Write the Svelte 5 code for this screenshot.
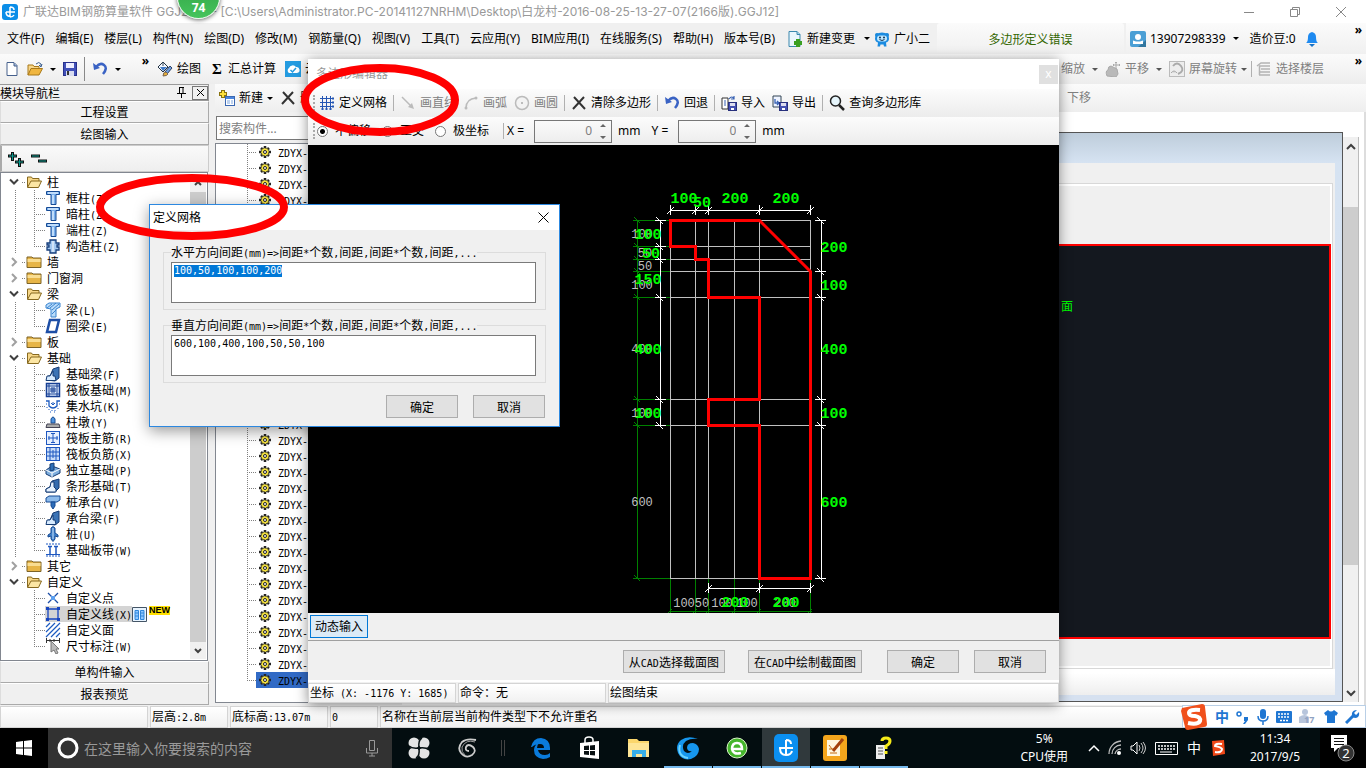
<script lang="ts">
  import { onMount } from "svelte";

  const icons: Record<string, string> = {
    app: '<rect width="16" height="16" rx="3" fill="#0b8ee8"/><path d="M8 3v10M4 8h9M8 3Q12 3 12 6M4 8q0 4 4 4.500M8 13q3 0 4-2" fill="none" stroke="#fff" stroke-width="1.500"/>',
    doc: '<path d="M3 1.500h7l3 3v10H3z" fill="#fff" stroke="#46608c"/><path d="M10 2v3h3" fill="#9db8dc" stroke="#46608c"/>',
    open: '<path d="M1 14V4h5l1 1.500h5V8" fill="#f8d78a" stroke="#a87818"/><path d="M1 14l3-6.500h11.500L12 14z" fill="#f0b640" stroke="#a87818"/><path d="M9 3q3-3 5 0v2m-2-1 2 2 1-3" fill="none" stroke="#3b5f8f"/>',
    save: '<rect x="1.500" y="1.500" width="13" height="13" fill="#4050b8" stroke="#28308c"/><rect x="4" y="2" width="8" height="5" fill="#eef"/><rect x="4" y="10" width="8" height="5" fill="#d8dcf0"/><path d="M6 10v4" stroke="#333" stroke-width="2"/>',
    undo: '<path d="M4 6q4-5 8-2t-1 9" fill="none" stroke="#3a63c4" stroke-width="2.500"/><path d="M1 2l1 7 6-2z" fill="#3a63c4"/>',
    paint: '<path d="M1 6l5-5 5 5-5 5z" fill="#f4f8ff" stroke="#234"/><path d="M3 6h7l-4 4z" fill="#3f79c6"/><path d="M6 5V1M11 6q2 1 1 4" stroke="#345" fill="none"/><path d="M8 11l5-6 2 2-5 6z" fill="#6f9fe0" stroke="#346"/><path d="M6 15q0-4 3-4l2 2q-1 2-5 2z" fill="#e8b03a" stroke="#765"/>',
    cloud: '<rect width="16" height="16" fill="#249be0"/><path d="M4 12a3 3 0 0 1 0-5 4 4 0 0 1 7-1 3 3 0 0 1 1 6z" fill="#fff"/><path d="M5.500 9l2 2L11 7" fill="none" stroke="#249be0" stroke-width="1.500"/>',
    change: '<path d="M2 .5h8l3 3v12H2z" fill="#eaf6fd" stroke="#3c88ae"/><path d="M10 .5v3h3" fill="#a8d4ea" stroke="#3c88ae"/><path d="M11 8v8M7 12h8" stroke="#3ba022" stroke-width="4"/>',
    robot: '<circle cx="3" cy="4" r="2" fill="#1484d6"/><circle cx="13" cy="4" r="2" fill="#1484d6"/><path d="M8 1.500q7 0 7 6 0 3-3 4l.5 4H10l-.5-2h-3l-.5 2H3.500l.5-4q-3-1-3-4 0-6 7-6z" fill="#1b8be0"/><rect x="3" y="4.500" width="10" height="6" rx="3" fill="#bfe8ff"/><circle cx="6" cy="6.500" r="1" fill="#135"/><circle cx="10" cy="6.500" r="1" fill="#135"/><path d="M5.500 8.500q2.500 2 5 0" fill="none" stroke="#135"/>',
    user: '<rect width="16" height="16" rx="2" fill="#4b9fd5"/><path d="M8 16L16 9v7z" fill="#32779f"/><circle cx="8" cy="6" r="3" fill="#fff"/><path d="M3 13V9.500l3 1h4l3-1V13z" fill="#fff"/>',
    bell: '<path d="M2 12q2-1 2-6 0-4 4-5 4 1 4 5 0 5 2 6z" fill="#1e8af0"/><path d="M5 13h6l-3 3z" fill="#1673c8"/>',
    hand: '<path d="M2 15q-2-5 1-6 0-4 3-4l6 3 1 5-2 3z" fill="#b9b9b9" stroke="#aaa"/><path d="M11 1v7M8 4h7M10 2l1-1 1 1M9 3L8 4l1 1M14 3l1 1-1 1" fill="none" stroke="#aaa"/>',
    rotate: '<rect x=".5" y=".5" width="15" height="15" fill="#ededed" stroke="#bbb"/><path d="M4 5q4-5 8 0t-3 8" fill="none" stroke="#aaa" stroke-width="2"/><path d="M2 12q3-4 6 0" stroke="#aaa" fill="#ddd"/>',
    floors: '<path d="M1 5l4-3h9M3 5h11M5 8h9M4 11h10M3 14h11M3.500 5v9" stroke="#b4b4b4" stroke-width="1.500" fill="none"/>',
    create: '<path d="M4 0v8M0 4h8" stroke="#8a7410" stroke-width="4"/><path d="M4 1v6M1 4h6" stroke="#ffe03a" stroke-width="2"/><rect x="6.500" y="6.500" width="9" height="9" fill="#fff" stroke="#3b68b2"/><path d="M7 8h8" stroke="#4c86dd" stroke-width="2"/><path d="M8 11h3M8 13h3M12 11h2M12 13h2" stroke="#7aa5e0"/>',
    cross: '<path d="M3 2l11 12M13 2L2 14" stroke="#333" stroke-width="2"/>',
    grid: '<path d="M3.500 1v14M7.500 1v14M11.500 1v14M1 3.500h14M1 7.500h14M1 11.500h14" stroke="#2456b4"/><path d="M14 2v3M14 6v3M14 10v3M2 14h3M6 14h3M10 14h3" stroke="#2456b4"/>',
    line: '<path d="M2 2l9 9" stroke="#bbb" stroke-width="1.500"/><path d="M14 14l-6-2 4-4z" fill="#bbb"/>',
    arc: '<path d="M3 13Q3 4 13 3" fill="none" stroke="#bbb" stroke-width="1.500"/><circle cx="3" cy="13" r="1.500" fill="#bbb"/><circle cx="13" cy="3" r="1.500" fill="#bbb"/>',
    circle: '<circle cx="8" cy="8" r="6.500" fill="#f3f3f3" stroke="#bbb" stroke-width="1.500"/><circle cx="8" cy="8" r="1" fill="#aaa"/>',
    importing: '<path d="M1 3h6v11H1z" fill="#fff" stroke="#333"/><path d="M3 6h2M3 8h2M3 10h2M8 4q3-4 5 0m0-3v3h-3" stroke="#3a63b4" fill="none" stroke-width="1.200"/><rect x="7.500" y="7.500" width="8" height="8" fill="#4450b0" stroke="#28307c"/><rect x="9" y="8" width="5" height="3" fill="#dde"/><path d="M10 14h3" stroke="#fff" stroke-width="2"/>',
    exporting: '<path d="M1 1h8v11H1z" fill="#eef3ff" stroke="#345"/><path d="M3 4v4h4M5 6l2 2-2 2" stroke="#3a63b4" fill="none" stroke-width="1.300"/><rect x="7.500" y="7.500" width="8" height="8" fill="#4450b0" stroke="#28307c"/><rect x="9" y="8" width="5" height="3" fill="#dde"/><path d="M10 14h3" stroke="#fff" stroke-width="2"/>',
    search: '<circle cx="6.500" cy="6" r="5" fill="#e6f5fb" stroke="#222" stroke-width="1.500"/><path d="M10 10l5 5" stroke="#222" stroke-width="2.500"/>',
    folder: '<path d="M1 3h5l1 1h8v9.500H1z" fill="#e7b547" stroke="#7d6327"/><path d="M1.500 5h13v3h-13z" fill="#f9dd92"/>',
    folderOpen: '<path d="M1.500 13V3h4l1 1.500h6.500V7" fill="#f7d788" stroke="#86681f"/><path d="M1.500 13.500L5 7h10.500l-3 6.500z" fill="#fce6a4" stroke="#86681f"/>',
    column: '<path d="M1.500 1.500h13v3H11v10H6v-10H1.500z" fill="#79b0ee" stroke="#164a94"/><path d="M3 3h10M8 5v9" stroke="#d8ebff" stroke-width="1.500"/>',
    struct: '<path d="M5 2h6v3h3v2h-2v2h2v3h-3v3H5v-3H2V9h2V7H2V5h3z" fill="#a3c8f0" stroke="#173f7c" stroke-width="1.300"/><path d="M8 3v11" stroke="#fff"/>',
    beam: '<path d="M1 3l3-2h11v4l-4 2v8H6V7L1 6z" fill="#b9dbfa" stroke="#3a84cf"/><path d="M2 6l5-4M5 6l6-5M7 8l7-6M7 12l4-4" stroke="#3a84cf"/>',
    ring: '<path d="M5 2h9l-3 12H2z" fill="#fff" stroke="#1d4ea6" stroke-width="2.500"/>',
    footBeam: '<path d="M2 14l1-4h2l3-7 6-2v11l-4 3z" fill="#3b73b5" stroke="#163c74"/><path d="M1 14.500h10L10 10H8V5l-3 5H2z" fill="#d7ebff" stroke="#163c74"/>',
    raft: '<rect x="1.500" y="1.500" width="13" height="13" fill="#e4f0ff" stroke="#173f94" stroke-width="1.500"/><path d="M4 2v12M12 2v12M2 4h12M2 12h12M6 6h4v4H6zM8 6v4M6 8h4" stroke="#173f94" fill="none"/>',
    pit: '<path d="M1 3h3v5q4 4 8 0V3h3" fill="none" stroke="#1d5bc0" stroke-width="1.300"/><path d="M2 9v1M4 11v1M7 12v1M10 12v1M13 10v1M5 14h1M9 14h1M1 6h1M14 6h1M8 4v3M6 5l2 2 2-2" stroke="#1d5bc0" fill="none"/>',
    pier: '<path d="M6 5q2-4 4 0v4H6z" fill="#4e93df" stroke="#174a90"/><path d="M2 10h12l1 3.500H1z" fill="#aaa" stroke="#445"/>',
    rebar: '<rect x="1.500" y="1.500" width="13" height="13" fill="#e6f0ff" stroke="#1f58c0"/><path d="M8 3v10M3 8h10M4 6v4M12 6v4M6 3.500h4M6 12.500h4" stroke="#1f58c0"/>',
    rebarNeg: '<rect x="1.500" y="1.500" width="13" height="13" fill="#c8dcf8" stroke="#1f58c0"/><path d="M5 2v12M11 2v12M2 6h12M2 10h12M8 4v8" stroke="#1f58c0"/>',
    isolated: '<path d="M1 8l6-4 8 3v4l-8 4-6-3z" fill="#7eaede" stroke="#153c74"/><path d="M5 2l4-1v7l-4 1z" fill="#2e6fb6" stroke="#153c74"/><path d="M1 8l6 3 8-4M7 11v4" fill="none" stroke="#fff"/>',
    strip: '<path d="M1 14v-3l4-2 2-6 7-2v9l-4 4z" fill="#346cb0" stroke="#163c74"/><path d="M1 14v-3l4-2 1-5h3v5l2 2v3z" fill="#e6f2ff" stroke="#163c74"/>',
    cap: '<path d="M1 4l3-2h11v4l-3 2H1z" fill="#8dbbeb" stroke="#164a94"/><path d="M6 8h4v4l-2 3-2-3z" fill="#2d6cb8" stroke="#164a94"/>',
    pile: '<path d="M6 2l2-1.500L10 2v5l3 2v2l-3-1v3l-2 2.500L6 13v-3l-3 1V9l3-2z" fill="#3d7ec8" stroke="#164a94"/><path d="M8 2v11" stroke="#cfe6ff"/>',
    band: '<path d="M1 2h14M1 14h14" stroke="#1f58c0" stroke-dasharray="2 1"/><path d="M1 12.500h14" stroke="#1f58c0"/><path d="M5 5v7M11 5v7M3 4.500h4M9 4.500h4" stroke="#1f58c0" stroke-width="1.500"/>',
    point: '<path d="M3 3l10 10M13 3L3 13" stroke="#1d4ea6" stroke-width="1.300"/><rect x="6" y="6" width="4" height="4" fill="#5ca0f0"/>',
    poly: '<path d="M3 3h10v10H3z" fill="none" stroke="#1745c0" stroke-width="1.300"/><path d="M1 1h3v3H1zM12 1h3v3h-3zM1 12h3v3H1zM12 12h3v3h-3z" fill="#1745c0"/>',
    hatch: '<path d="M1 5l4-4M1 10l9-9M1 15L15 1M6 15l9-9M11 15l4-4" stroke="#1d5bc0" stroke-width="1.200"/>',
    measure: '<path d="M1.500 0v5M14.500 0v5M1 2.500h14M5 1v3M9 1v3" stroke="#333"/><path d="M6 3l8 8h-3l2 4-2 1-2-4-3 2z" fill="#bbb" stroke="#777"/>',
    gear: '<path d="M8 2v12M2 8h12M4 4l8 8M12 4l-8 8" stroke="#222" stroke-width="2.500"/><circle cx="8" cy="8" r="4" fill="#f4e13c" stroke="#333" stroke-dasharray="2 1"/><circle cx="8" cy="8" r="1.500" fill="#fff" stroke="#222"/>',
  };

  const menus = [
    "文件(F)", "编辑(E)", "楼层(L)", "构件(N)", "绘图(D)", "修改(M)", "钢筋量(Q)",
    "视图(V)", "工具(T)", "云应用(Y)", "BIM应用(I)", "在线服务(S)", "帮助(H)", "版本号(B)",
  ];

  const tree = [
    { name: "柱", open: true, items: [["column", "框柱(Z)"], ["column", "暗柱(Z)"], ["column", "端柱(Z)"], ["struct", "构造柱(Z)"]] },
    { name: "墙", open: false, items: [] },
    { name: "门窗洞", open: false, items: [] },
    { name: "梁", open: true, items: [["beam", "梁(L)"], ["ring", "圈梁(E)"]] },
    { name: "板", open: false, items: [] },
    {
      name: "基础",
      open: true,
      items: [
        ["footBeam", "基础梁(F)"], ["raft", "筏板基础(M)"], ["pit", "集水坑(K)"], ["pier", "柱墩(Y)"],
        ["rebar", "筏板主筋(R)"], ["rebarNeg", "筏板负筋(X)"], ["isolated", "独立基础(P)"], ["strip", "条形基础(T)"],
        ["cap", "桩承台(V)"], ["footBeam", "承台梁(F)"], ["pile", "桩(U)"], ["band", "基础板带(W)"],
      ],
    },
    { name: "其它", open: false, items: [] },
    { name: "自定义", open: true, items: [["point", "自定义点"], ["poly", "自定义线(X)"], ["hatch", "自定义面"], ["measure", "尺寸标注(W)"]] },
  ];

  const components = Array.from({ length: 34 }, (_, i) => i);
  let current = $state(33);
  let activeItem = $state("自定义线(X)");
  let mode = $state("不偏移");

  let horizontal = $state("100,50,100,100,200");
  let vertical = $state("600,100,400,100,50,50,100");
  let spacingBox: HTMLTextAreaElement;

  onMount(() => {
    spacingBox.focus();
    spacingBox.select();
  });

  // section grid
  const xs = [670, 695, 708, 734, 759, 810];
  const ys = [220, 246, 259, 271, 297, 399, 425, 578];
  const leftDims = [220, 246, 259, 297, 399, 425];
  const rightDims = [220, 271, 297, 399, 425, 578];
  const topDims = [670, 695, 708, 759, 810];
  const bottomDims = [708, 759, 810];
  const greyLabels: [number, number, string][] = [
    [642, 238, "100"], [645, 257, "50"], [645, 270, "50"], [642, 289, "100"], [642, 353, "400"],
    [642, 417, "100"], [642, 506, "600"], [684, 607, "100"], [702, 607, "50"], [722, 607, "100"],
    [747, 607, "100"], [785, 607, "200"],
  ];
  const greenLabels: [number, number, string][] = [
    [684, 203, "100"], [702, 207, "50"], [735, 203, "200"], [786, 203, "200"],
    [648, 239, "100"], [651, 258, "50"], [648, 284, "150"], [648, 354, "400"], [648, 418, "100"],
    [834, 252, "200"], [834, 290, "100"], [834, 354, "400"], [834, 418, "100"], [834, 507, "600"],
    [735, 607, "200"], [786, 607, "200"],
  ];
</script>

{#snippet icon(name: string)}
  <svg class="icon" viewBox="0 0 16 16" aria-hidden="true">{@html icons[name]}</svg>
{/snippet}

<!-- half-width characters are set narrower than the ideographs -->
{#snippet song(text: string)}
  <span class="song">{#each text.split(/([\x20-\x7e]+)/) as run}<span class:half={/^[\x20-\x7e]/.test(run)}>{run}</span>{/each}</span>
{/snippet}

{#snippet tool(name: string, label: string, off = false)}
  <button class="tool" class:off>{@render icon(name)}{label}</button>
{/snippet}

<div class="desktop">
  <header class="titlebar">
    {@render icon("app")}
    <span class="caption">广联达BIM钢筋算量软件 GGJ2013 - [C:\Users\Administrator.PC-20141127NRHM\Desktop\白龙村-2016-08-25-13-27-07(2166版).GGJ12]</span>
    <div class="winbtns">
      <button aria-label="最小化"><svg width="10" height="10"><path d="M0 5.500h10" stroke="#888" /></svg></button>
      <button aria-label="还原"><svg width="10" height="10"><path d="M.5 2.500h7v7h-7zM2.500 2V.5h7v7H8" stroke="#888" fill="none" /></svg></button>
      <button aria-label="关闭"><svg width="10" height="10"><path d="M0 0l10 10M10 0L0 10" stroke="#888" /></svg></button>
    </div>
  </header>

  <nav class="menubar">
    <div class="menus">
      {#each menus as m}<button>{m}</button>{/each}
      <button class="tool change">{@render icon("change")}新建变更<i class="dd"></i></button>
      <button class="tool helper">{@render icon("robot")}广小二</button>
    </div>
    <div class="notice">{@render song("多边形定义错误")}</div>
    <div class="account">
      <button class="tool">{@render icon("user")}13907298339<i class="dd wide"></i></button>
      <span>造价豆:0</span>
      {@render icon("bell")}
      <b class="more">»</b>
    </div>
  </nav>

  <div class="toolbar">
    <div class="band files">
      <button aria-label="新建">{@render icon("doc")}</button>
      <button class="dropper" aria-label="打开">{@render icon("open")}<i class="dd wide"></i></button>
      <button aria-label="保存">{@render icon("save")}</button>
      <span class="sep"></span>
      <button class="dropper" aria-label="撤销">{@render icon("undo")}<i class="dd wide"></i></button>
      <b class="more">»</b>
    </div>
    <div class="band draw">
      {@render tool("paint", "绘图")}
      <button class="tool"><b class="sigma">Σ</b>汇总计算</button>
      {@render tool("cloud", "云检查")}
    </div>
    <div class="band view">
      <button class="tool off">缩放<i class="dd wide"></i></button>
      <button class="tool off">{@render icon("hand")}平移<i class="dd wide"></i></button>
      <button class="tool off">{@render icon("rotate")}屏幕旋转<i class="dd"></i></button>
      <span class="sep"></span>
      {@render tool("floors", "选择楼层", true)}
      <b class="more">»</b>
    </div>
  </div>

  <main class="work">
    <aside class="nav">
      <div class="navhead">
        {@render song("模块导航栏")}
        <button aria-label="固定"><svg width="9" height="11"><path d="M2 .5h5M2.500 0v6M6 0v6M0 6.500h9M4.500 7v4" stroke="#000" fill="none" /></svg></button>
        <button class="shut" aria-label="关闭"><svg width="9" height="9"><path d="M1 1l7 7M8 1L1 8" stroke="#000" /></svg></button>
      </div>
      <button class="section">{@render song("工程设置")}</button>
      <button class="section">{@render song("绘图输入")}</button>
      <div class="expand">
        <svg width="40" height="16" aria-hidden="true"><path d="M0 5h9M4.500 1v9M7 11h9M11.500 7v9M23 5h9M30 10h9" stroke="#111" stroke-width="3" /><path d="M1 5h7M4.500 2v7M8 11h7M11.500 8v7M24 5h7M31 10h7" stroke="#0a9a8e" /></svg>
      </div>
      <div class="treebox">
        <ul class="tree">
          {#each tree as group, g}
            <li>
              <button class="row">
                <svg class="guide root" width="26" height="16" aria-hidden="true">
                  {#if group.open}<path d="M10 5.500l4 4 4-4" class="chev dark" />{:else}<path d="M12 4l4 4-4 4" class="chev" />{/if}
                  <path d="M22 8.500h4" class="dots" />
                </svg>
                {@render icon(group.open ? "folderOpen" : "folder")}
                <span class="glabel">{@render song(group.name)}</span>
              </button>
              {#each group.items as [ic, label], i}
                <button class="row" onclick={() => (activeItem = label)}>
                  <svg class="guide" width="45" height="16" aria-hidden="true">
                    {#if g < tree.length - 1}<path d="M15.500 0v16" class="dots" />{/if}
                    <path d={i === group.items.length - 1 ? "M34.500 0v8" : "M34.500 0v16"} class="dots" />
                    <path d="M34 8.500h11" class="dots" />
                  </svg>
                  <span class="leaf" class:active={activeItem === label}>{@render icon(ic)}<span>{@render song(label)}</span></span>
                  {#if ic === "poly"}
                    <svg width="15" height="15" aria-hidden="true"><path d="M.5.5h14v14H.5z" fill="#e8f4ff" stroke="#456" /><path d="M3 3.500h3.500v9H3zM8.500 3.500H12v9H8.500zM3 6h3M3 9h3M9 6h3M9 9h3" fill="#8fc8ff" stroke="#2f86da" /></svg>
                    <b class="new">NEW</b>
                  {/if}
                </button>
              {/each}
            </li>
          {/each}
        </ul>
        <div class="scroll">
          <svg width="16" height="18"><path d="M5 11l3-3 3 3" class="chev dark" /></svg>
          <div class="thumb"></div>
          <svg width="16" height="17"><path d="M5 7l3 3 3-3" class="chev dark" /></svg>
        </div>
      </div>
      <button class="section">{@render song("单构件输入")}</button>
      <button class="section">{@render song("报表预览")}</button>
    </aside>

    <section class="parts">
      <div class="bar">
        <button class="tool">{@render icon("create")}新建<i class="dd"></i></button>
        {@render tool("cross", "删除")}
      </div>
      <input class="find" type="text" placeholder="搜索构件..." aria-label="搜索构件" />
      <ul class="list">
        {#each components as n}
          <li>
            <button class="row" onclick={() => (current = n)}>
              <svg width="40" height="16" aria-hidden="true"><path d={n === components.length - 1 ? "M31.500 0v8" : "M31.500 0v16"} class="dots" /><path d="M31 8.500h9" class="dots" /></svg>
              <span class="part" class:active={current === n}>{@render icon("gear")}{@render song("ZDYX-")}</span>
            </button>
          </li>
        {/each}
      </ul>
    </section>

    <section class="mdi">
      <div class="bar"><button class="tool off">下移</button></div>
      <div class="mdibody">
        <div class="child">
          <div class="childframe">
            <div class="inner">
              <div class="drawing"><span>面</span></div>
            </div>
            <div class="childstatus"></div>
          </div>
        </div>
        <div class="scroll tall">
          <svg width="16" height="18"><path d="M4 12l4-4 4 4" class="chev dark" /></svg>
          <div class="gap"></div>
          <div class="thumb"></div>
          <div class="gap end"></div>
          <svg width="16" height="18"><path d="M4 7l4 4 4-4" class="chev dark" /></svg>
        </div>
      </div>
    </section>
  </main>

  <footer class="status">
    <span class="c1"></span>
    <span class="c2">{@render song("层高:2.8m")}</span>
    <span class="c3">{@render song("底标高:13.07m")}</span>
    <span class="c4">{@render song("0")}</span>
    <span class="rest">{@render song("名称在当前层当前构件类型下不允许重名")}</span>
  </footer>

  <div class="taskbar">
    <button class="start" aria-label="开始"><svg width="16" height="16"><path d="M0 2l7-1v6.500H0zM8 1l8-1v7.500H8zM0 8.500h7V15l-7-1zM8 8.500h8V16l-8-1z" fill="#fff" /></svg></button>
    <label class="cortana">
      <svg width="22" height="22" aria-hidden="true"><circle cx="11" cy="11" r="9" fill="none" stroke="#fff" stroke-width="3" /></svg>
      <input type="text" placeholder="在这里输入你要搜索的内容" aria-label="搜索" />
      <svg width="12" height="17" aria-hidden="true"><path d="M3.500.5h5v10h-5zM.5 8v5h11V8M6 13v3M3 16h6" fill="none" stroke="#999" /></svg>
    </label>
    <button class="task" aria-label="花瓣"><svg width="22" height="22"><g fill="#e4e4e4"><circle cx="6" cy="6" r="5.500" /><circle cx="16" cy="6" r="5.500" /><circle cx="6" cy="16" r="5.500" /><circle cx="16" cy="16" r="5.500" /></g><path d="M11 11Q4 12 1 9M11 11q-1-8 3-10M11 11q7-1 10 2M11 11q1 8-3 10" stroke="#061012" fill="none" stroke-width="1.500" /></svg></button>
    <button class="task" aria-label="浏览器"><svg width="20" height="20"><path d="M18 2q-9-2-14 2-5 6-1 11 5 6 11 2 5-4 1-8-5-4-7 0-1 4 3 4" fill="none" stroke="#ccc" stroke-width="1.800" /><path d="M17 4q-9-3-13 5-1 5 3 8" fill="none" stroke="#999" /></svg></button>
    <span class="tick"></span>
    <button class="task" aria-label="Edge"><svg width="22" height="22"><path d="M1 10Q3 1 11 1q9 1 9 10v2H8q1 5 7 5 3 0 5-2v4q-3 2-7 2-9-1-9-9 0-5 5-7-2 2-2 5h7q0-4-4-4-5 0-8 3z" fill="#0a7bdc" /></svg></button>
    <button class="task" aria-label="应用商店"><svg width="22" height="24"><path d="M1 7l19-2v18L1 21z" fill="#fff" /><path d="M6 7V4q0-3 4-3t4 3v2" fill="none" stroke="#fff" stroke-width="1.500" /><path d="M5 10l5-.5V14H5zM11 9.500l5-.5v5h-5zM5 15h5v4l-5-.5zM11 15h5v4.500l-5-.5z" fill="#081012" /></svg></button>
    <button class="task" aria-label="文件资源管理器"><svg width="22" height="20"><path d="M0 1h9l2 2h10v16H0z" fill="#fbd66c" /><path d="M0 5h21v14H0z" fill="#fee596" /><path d="M4 19v-7h14v7h-4v-3H8v3z" fill="#38aee8" /></svg></button>
    <button class="task run" aria-label="浏览器"><svg width="24" height="24"><path d="M22 3Q12-1 5 4-1 9 2 17q4 8 13 6 8-3 8-10-1-5-6-6-6 0-6 5 1 4 5 3-4 4-8 0-3-6 2-10 5-3 12-2z" fill="#1696ee" /><path d="M4 9Q1 20 12 22" fill="none" stroke="#6cd4ff" stroke-width="2" /></svg></button>
    <button class="task run" aria-label="360浏览器"><svg width="22" height="24"><circle cx="11" cy="12" r="10" fill="#45b52c" stroke="#d9f4c8" /><path d="M5 13h11q0-6-5-6t-5 6q1 6 9 4" fill="none" stroke="#fff" stroke-width="2.500" /></svg></button>
    <button class="task run on" aria-label="广联达"><svg width="24" height="28"><rect width="24" height="28" rx="5" fill="#0b8ff0" /><path d="M12 6v16M5 14h14M12 6q5 0 5 4M6 14q0 7 6 7M12 21q5 0 6-4" fill="none" stroke="#fff" stroke-width="2" /></svg></button>
    <button class="task run" aria-label="画图"><svg width="24" height="26"><rect width="24" height="26" rx="3" fill="#f4a51c" /><path d="M4 5h13v16H4z" fill="#fff7df" /><path d="M6 10l3 4M6 14h6M7 18h7" stroke="#c46a10" /><path d="M10 16L20 4" stroke="#a3410c" stroke-width="3" /></svg></button>
    <button class="task run" aria-label="帮助"><svg width="18" height="24"><path d="M1 9h9v14H1z" fill="#eee" /><path d="M3 12h5M3 15h5M3 18h5" stroke="#555" /><path d="M7 5q0-3 4-3t4 3-4 5v3" fill="none" stroke="#f5ea18" stroke-width="3" /><path d="M11 15v3" stroke="#f5ea18" stroke-width="3" /></svg></button>
    <div class="tray">
      <div class="cpu"><span>5%</span><span>CPU使用</span></div>
      <svg width="12" height="8"><path d="M1 7l5-5 5 5" fill="none" stroke="#fff" stroke-width="1.500" /></svg>
      <svg width="14" height="16"><path d="M1 14A13 13 0 0 1 13 1M4 14a9 9 0 0 1 9-9M7 14a6 6 0 0 1 6-5" fill="none" stroke="#bbb" stroke-width="1.300" /><circle cx="11" cy="13" r="2" fill="#fff" /></svg>
      <svg width="17" height="14"><path d="M1 5h2l4-4v12L3 9H1z" fill="none" stroke="#fff" /><path d="M9 4q2 3 0 6M11 2q4 5 0 10M13 1q5 6 0 12" fill="none" stroke="#ccc" /></svg>
      <svg width="24" height="15"><path d="M.5 1.500h22v12H.5z" fill="none" stroke="#fff" /><path d="M3 5h17M3 8h17" stroke="#fff" stroke-dasharray="2 1" stroke-width="1.500" /><path d="M5 11h12" stroke="#fff" /></svg>
      <span class="ime">中</span>
      <svg width="18" height="18"><path d="M3 2l12-1 1 14-12 2z" fill="#f04818" /><path d="M13 5Q6 4 6 7q6 1 7 3 0 4-7 3" fill="none" stroke="#fff" stroke-width="2" /></svg>
    </div>
    <div class="clock"><span>11:34</span><span>2017/9/5</span></div>
    <button class="action" aria-label="通知"><svg width="28" height="30"><path d="M2 2h16v13H9l-4 4v-4H2z" fill="#fff" /><path d="M5 5.500h10M5 8.500h10M5 11.500h10" stroke="#111" /><circle cx="17" cy="20" r="8" fill="#333" stroke="#888" /><text x="17" y="25" text-anchor="middle" fill="#fff" font-size="13">2</text></svg></button>
  </div>

  <!-- polygon editor -->
  <div class="editor" role="dialog" aria-label="多边形编辑器">
    <div class="edtitle"><span>多边形编辑器</span><button aria-label="关闭">x</button></div>
    <div class="edtools">
      <i class="grip"></i>
      {@render tool("grid", "定义网格")}
      <span class="sep"></span>
      {@render tool("line", "画直线", true)}
      {@render tool("arc", "画弧", true)}
      {@render tool("circle", "画圆", true)}
      <span class="sep"></span>
      {@render tool("cross", "清除多边形")}
      <span class="sep"></span>
      {@render tool("undo", "回退")}
      <span class="sep"></span>
      {@render tool("importing", "导入")}
      {@render tool("exporting", "导出")}
      <span class="sep"></span>
      {@render tool("search", "查询多边形库")}
    </div>
    <div class="edopts">
      <i class="grip"></i>
      {#each ["不偏移", "正交", "极坐标"] as m}
        <label class="radio"><input type="radio" name="mode" value={m} bind:group={mode} />{m}</label>
      {/each}
      <span class="sep"></span>
      {#each ["X", "Y"] as axis}
        <label class="axis">{axis} =
          <span class="spin"><input type="text" value="0" disabled /><svg width="8" height="15" aria-hidden="true"><path d="M1 3l3-3 3 3zM1 12h6l-3 3z" fill="#666" /></svg></span>
          mm</label>
      {/each}
    </div>
    <svg class="canvas" viewBox="308 145 751 468" role="img" aria-label="截面图">
      <g stroke="#c0c0c0" shape-rendering="crispEdges">
        {#each xs as x}<path d="M{x}.500 220V578" />{/each}
        {#each ys as y}<path d="M670 {y}.500H810" />{/each}
      </g>
      <g stroke="#008000" fill="none">
        <path d="M637.500 220V578M670 611.500H812" />
        {#each ys as y}<path d="M633 {y}.500H670M634 {y - 3}l6 6" />{/each}
        {#each xs as x}<path d="M{x}.500 579V613M{x - 2} 613l4-4" />{/each}
      </g>
      <g class="grey">{#each greyLabels as [x, y, t]}<text {x} {y}>{t}</text>{/each}</g>
      <g stroke="#fff" fill="none">
        <path d="M660.500 220V425M821.500 220V578M670 210.500H810M708 588.500H810" />
        {#each leftDims as y}<path d="M655 {y}.500h11M656 {y - 3}l7 7" />{/each}
        {#each rightDims as y}<path d="M815 {y}.500h11M817 {y - 3}l7 7" />{/each}
        {#each topDims as x}<path d="M{x}.500 205v10M{x - 3} 214l7-7" />{/each}
        {#each bottomDims as x}<path d="M{x}.500 583v10M{x - 3} 592l7-7" />{/each}
      </g>
      <path class="shape" d="M670.500 220.500H759.500L810.500 271.500V578.500H759.500V425.500H708.500V399.500H759.500V297.500H708.500V259.500H695.500V246.500H670.500Z" />
      <g class="green">{#each greenLabels as [x, y, t]}<text {x} {y}>{t}</text>{/each}</g>
    </svg>
    <div class="dyn"><button>动态输入</button></div>
    <div class="edbtns">
      <button>{@render song("从CAD选择截面图")}</button>
      <button>{@render song("在CAD中绘制截面图")}</button>
      <button class="std">{@render song("确定")}</button>
      <button class="std">{@render song("取消")}</button>
    </div>
    <div class="edstatus">
      <span>{@render song("坐标 (X: -1176 Y: 1685)")}</span>
      <span>{@render song("命令：无")}</span>
      <span class="rest">{@render song("绘图结束")}</span>
    </div>
  </div>

  <!-- grid definition -->
  <form class="dialog" onsubmit={(e) => e.preventDefault()}>
    <div class="dtitle"><span>定义网格</span><button type="button" aria-label="关闭"><svg width="11" height="11"><path d="M.5.5l10 10M10.500.5l-10 10" stroke="#000" /></svg></button></div>
    <div class="dbody">
      <fieldset>
        <legend><label for="hs">{@render song("水平方向间距(mm)=>间距*个数,间距,间距*个数,间距,...")}</label></legend>
        <textarea id="hs" bind:this={spacingBox} bind:value={horizontal} spellcheck="false"></textarea>
      </fieldset>
      <fieldset>
        <legend><label for="vs">{@render song("垂直方向间距(mm)=>间距*个数,间距,间距*个数,间距,...")}</label></legend>
        <textarea id="vs" bind:value={vertical} spellcheck="false"></textarea>
      </fieldset>
      <div class="dbtns">
        <button class="std">{@render song("确定")}</button>
        <button class="std" type="button">{@render song("取消")}</button>
      </div>
    </div>
  </form>

  <div class="sogou">
    <svg class="slogo" width="28" height="28" aria-hidden="true"><path d="M2 5l20-4q3 0 3 3l2 17q0 3-3 3L8 27q-3 0-3-3L1 8z" fill="#f0501c" /><path d="M20 7Q9 6 9 10q0 3 6 3 6 1 5 5-2 4-12 2" fill="none" stroke="#fff" stroke-width="4" /></svg>
    <b>中</b>
    <svg width="14" height="14"><circle cx="3" cy="4" r="2" fill="none" stroke="#1f76d2" stroke-width="1.500" /><path d="M8 7h4v3l-3 4H7l2-3H8z" fill="#1f76d2" /></svg>
    <svg width="12" height="16"><rect x="3" width="6" height="10" rx="3" fill="#1f76d2" /><path d="M1 7q0 5 5 5t5-5M6 12v4" fill="none" stroke="#1f76d2" stroke-width="1.500" /></svg>
    <svg width="16" height="12"><rect width="16" height="12" rx="1" fill="#1f76d2" /><path d="M2 3h12M2 6h12M4 9.500h8" stroke="#fff" stroke-dasharray="2 1" stroke-width="1.500" /></svg>
    <svg width="18" height="18"><circle cx="6" cy="4" r="3" fill="#b7c5dc" /><path d="M0 15V9q6-4 10 0v6z" fill="#b7c5dc" /><text x="5" y="15" font-size="9" font-weight="bold" fill="#8fa2c2">17</text></svg>
    <svg width="14" height="13"><path d="M4 0q3 3 6 0l4 3-2 3-1-1v8H3V5L2 6 0 3z" fill="#1f76d2" /></svg>
    <svg width="15" height="15"><path d="M1 14l8-8" stroke="#1f76d2" stroke-width="3" /><path d="M12 1L9 4l2 2 3-3q1 5-3 6-5 0-4-5 1-3 5-3z" fill="#1f76d2" /></svg>
  </div>

  <div class="speed">74</div>
  <svg class="ring first" width="160" height="74" aria-hidden="true"><ellipse cx="80" cy="37" rx="75" ry="32" /></svg>
  <svg class="ring second" width="194" height="68" aria-hidden="true"><ellipse cx="97" cy="34" rx="92" ry="29" /></svg>
</div>

<style>
  :global(body) {
    margin: 0;
    background: #f0f0f0;
  }

  .desktop {
    position: relative;
    display: flex;
    flex-direction: column;
    min-height: 100vh;
    overflow: hidden;
    font: 12px/16px "Noto Sans", "Noto Sans CJK SC", sans-serif;
    color: #000;
  }

  .desktop * {
    box-sizing: border-box;
  }

  button {
    display: flex;
    align-items: center;
    border: none;
    padding: 0;
    margin: 0;
    background: none;
    color: inherit;
    font: inherit;
    white-space: nowrap;
  }

  svg {
    flex: none;
    display: block;
  }

  .icon {
    width: 16px;
    height: 16px;
  }

  .song {
    font: 12px/16px "Noto Sans CJK SC", sans-serif;
    white-space: pre;
  }

  .half {
    font: 10px/12px "DejaVu Sans Mono", monospace;
  }

  .dd {
    width: 0;
    height: 0;
    margin-left: 3px;
    border: 3px solid transparent;
    border-top-color: #000;
    border-bottom: none;
  }

  .dd.wide {
    margin-left: 7px;
  }

  .off {
    color: #808080;
  }

  .off .dd {
    border-top-color: #555;
  }

  .tool {
    gap: 4px;
  }

  .tool .dd {
    margin-left: 0;
  }

  .tool .dd.wide {
    margin: 0 3px;
  }

  .sep {
    width: 1px;
    height: 16px;
    background: #b0b0b0;
  }

  .more {
    font-size: 12px;
    line-height: 12px;
    align-self: flex-start;
    margin-top: 1px;
    margin-left: auto;
  }

  .titlebar {
    display: flex;
    align-items: center;
    height: 23px;
    padding-left: 2px;
    background: #fff;
    color: #999;
  }

  .caption {
    margin-left: 5px;
    font-family: Inter, "Noto Sans CJK SC", sans-serif;
    white-space: nowrap;
  }

  .winbtns {
    display: flex;
    margin-left: auto;
    padding-right: 2px;
  }

  .winbtns button {
    width: 46px;
    justify-content: center;
  }

  .menubar {
    display: flex;
    height: 31px;
    background: #f0f0f0;
  }

  .menus {
    display: flex;
    align-items: center;
    gap: 11px;
    width: 937px;
    padding-left: 7px;
  }

  .change {
    margin-left: 1px;
  }

  .helper {
    margin-left: -7px;
  }

  .change .dd {
    margin-left: 5px;
  }

  .notice {
    display: flex;
    align-items: center;
    justify-content: center;
    width: 187px;
    margin-right: 2px;
    border-radius: 3px;
    background: linear-gradient(#fbfbfb, #f0f0f0);
    color: #360;
  }

  .account {
    display: flex;
    flex: 1;
    align-items: center;
    gap: 8px;
    padding: 0 4px;
    background: linear-gradient(#fbfbfb, #f0f0f0);
  }

  .toolbar {
    display: flex;
    height: 30px;
    background: #f0f0f0;
  }

  .band {
    display: flex;
    align-items: center;
    background: linear-gradient(#fbfbfb, #ededed);
  }

  .files {
    width: 153px;
    gap: 7px;
    padding: 0 4px;
  }

  .files .sep {
    height: 24px;
    margin-left: -1px;
    background: #888;
  }

  .files .dropper {
    width: 28px;
  }

  .draw {
    flex: 1;
    gap: 9px;
    padding-left: 4px;
  }

  .sigma {
    width: 14px;
    font: bold 15px "Liberation Serif", serif;
  }

  .view {
    gap: 4px;
    width: 307px;
    padding: 0 4px 0 2px;
  }

  .work {
    display: flex;
    flex: 1;
    background: #f0f0f0;
  }

  .nav {
    display: flex;
    flex-direction: column;
    width: 209px;
    margin-right: 6px;
  }

  .navhead {
    display: flex;
    align-items: center;
    height: 17px;
    border: 1px solid #999;
    border-left: none;
    gap: 6px;
  }

  .navhead button {
    margin-left: auto;
  }

  .navhead .shut {
    justify-content: center;
    width: 16px;
    height: 14px;
    margin-left: 0;
    border: 1px solid #777;
  }

  .section {
    justify-content: center;
    height: 22px;
    border: 1px solid #aaa;
    border-left-color: #ddd;
    border-top-color: #fff;
  }

  .expand {
    display: flex;
    align-items: center;
    height: 27px;
    padding-left: 6px;
    border: 1px solid #ccc;
    border-left: 2px solid #aaa;
    background: linear-gradient(#fafafa, #eee);
  }

  .treebox {
    display: flex;
    flex: 1;
    margin-right: 1px;
    padding: 1px;
    border: 1px solid #828790;
    background: #fff;
  }

  ul {
    margin: 0;
    padding: 0;
    list-style: none;
  }

  .tree {
    flex: 1;
    min-width: 0;
  }

  .row {
    width: 100%;
    height: 16px;
  }

  .guide {
    margin-left: -2px;
  }

  .glabel {
    padding-left: 5px;
  }

  .leaf {
    display: flex;
    gap: 5px;
    height: 16px;
  }

  .leaf.active {
    background: #d4d4d4;
  }

  .dots {
    fill: none;
    stroke: #808080;
    stroke-dasharray: 1 1;
  }

  .chev {
    fill: none;
    stroke: #a0a0a0;
    stroke-width: 2;
  }

  .chev.dark {
    stroke: #404040;
  }

  .new {
    margin-left: 2px;
    align-self: flex-start;
    font: bold 9px/9px "Liberation Sans", sans-serif;
    background: #ffe000;
  }

  .scroll {
    display: flex;
    flex-direction: column;
    width: 16px;
    background: #f0f0f0;
  }

  .thumb {
    flex: 1;
    background: #cdcdcd;
  }

  .parts {
    display: flex;
    flex-direction: column;
    width: 183px;
    margin-right: 4px;
    padding-bottom: 2px;
  }

  .bar {
    display: flex;
    align-items: center;
    gap: 7px;
    height: 28px;
    padding-left: 4px;
    background: linear-gradient(#fbfbfb, #eee);
  }

  .find {
    height: 24px;
    margin: 4px 0 3px 1px;
    padding: 0 2px;
    border: 1px solid #777;
    font: inherit;
  }

  .find::placeholder {
    color: #808080;
  }

  .list {
    flex: 1;
    border: 1px solid #828790;
    background: #fff;
  }

  .part {
    display: flex;
    flex: 1;
    gap: 5px;
    height: 16px;
    padding-left: 1px;
  }

  .part.active {
    background: #316ac5;
  }

  .mdi {
    display: flex;
    flex: 1;
    flex-direction: column;
    min-width: 0;
  }

  .mdi .bar {
    padding-left: 665px;
  }

  .mdibody {
    display: flex;
    flex: 1;
    padding: 20px 5px 3px 0;
    background: #fff;
    border-right: 2px solid #ddd;
  }

  .child {
    display: flex;
    flex: 1;
    padding: 30px 7px 6px;
    border: 1px solid #555;
    background: linear-gradient(#becddb, #d6e3f2 30px, #d6e1f0);
  }

  .childframe {
    display: flex;
    flex: 1;
    flex-direction: column;
    padding-top: 20px;
    background: #f0f0f0;
  }

  .inner {
    display: flex;
    flex: 1;
    margin-right: 2px;
    padding: 60px 1px 29px;
    border: 1px solid #d8d8d8;
    box-shadow: inset 0 0 0 2px #fff;
  }

  .drawing {
    flex: 1;
    padding: 53px 0 0 647px;
    border: 2px solid #f00;
    background: #14181f;
    color: #0f0;
  }

  .childstatus {
    height: 26px;
    border-top: 4px solid #fff;
    background: linear-gradient(#fff, #eee);
  }

  .tall {
    margin-top: 5px;
    border-right: 1px solid #bbb;
  }

  .tall .gap {
    height: 52px;
  }

  .tall .gap.end {
    flex: 1;
  }

  .tall .thumb {
    flex: 3;
  }

  .status,
  .edstatus {
    display: flex;
    gap: 2px;
    height: 23px;
    padding-top: 1px;
  }

  .status > span,
  .edstatus > span {
    padding: 1px;
    border: 1px solid #d4d4d4;
    background: linear-gradient(#fff, #f1f1f1);
  }

  .c1 {
    width: 148px;
  }

  .c2 {
    width: 78px;
  }

  .c3 {
    width: 98px;
  }

  .c4 {
    width: 48px;
  }

  .rest {
    flex: 1;
  }

  .taskbar {
    display: flex;
    height: 40px;
    background: #030d10;
    color: #fff;
  }

  .start {
    justify-content: center;
    width: 48px;
    background: #000;
  }

  .cortana {
    display: flex;
    align-items: center;
    width: 344px;
    padding: 0 14px 0 9px;
    margin-right: 3px;
    background: #323232;
  }

  .cortana input {
    flex: 1;
    min-width: 0;
    padding: 0 5px;
    border: none;
    background: none;
    font: 14px/20px "Noto Sans CJK SC", sans-serif;
  }

  .cortana input::placeholder {
    color: #999;
  }

  .task {
    justify-content: center;
    width: 48px;
    margin-right: 1px;
  }

  .task.run {
    box-shadow: inset 0 -2px #76b9ed;
  }

  .task.on {
    background: #30393c;
  }

  .tick {
    width: 4px;
    height: 16px;
    margin: 12px 12px 12px 8px;
    border: 1px solid #444;
    border-width: 0 1px;
  }

  .tray {
    display: flex;
    align-items: center;
    gap: 8px;
    margin-left: auto;
    padding-right: 3px;
  }

  .cpu,
  .clock {
    display: flex;
    flex-direction: column;
    justify-content: center;
    align-items: center;
    line-height: 18px;
  }

  .cpu {
    padding-right: 12px;
  }

  .ime {
    font-size: 14px;
  }

  .clock {
    width: 90px;
  }

  .action {
    justify-content: center;
    width: 46px;
    background: #000;
  }

  .editor {
    position: absolute;
    left: 308px;
    top: 59px;
    width: 751px;
    background: #f0f0f0;
    box-shadow: 0 2px 12px rgba(0, 0, 0, 0.45);
  }

  .edtitle {
    display: flex;
    align-items: center;
    height: 30px;
    padding: 0 1px 0 8px;
    background: #fff;
    color: #999;
  }

  .edtitle button {
    justify-content: center;
    width: 19px;
    height: 19px;
    margin-left: auto;
    background: #e0e0e0;
    color: #fff;
  }

  .edtools,
  .edopts {
    display: flex;
    align-items: center;
    height: 28px;
    padding-left: 5px;
    background: linear-gradient(#fcfcfc, #ececec);
  }

  .edtools {
    gap: 7px;
  }

  .edtools .grip {
    margin-right: -3px;
  }

  .edtools .sep {
    margin: 0 -1px;
  }

  .grip {
    width: 2px;
    height: 16px;
    border-left: 2px dotted #aaa;
  }

  .edopts .sep {
    margin: 0 3px 0 5px;
  }

  .radio {
    display: flex;
    align-items: center;
    gap: 7px;
    padding-right: 9px;
  }

  .radio input {
    appearance: none;
    width: 11px;
    height: 11px;
    margin: 0 0 0 2px;
    border: 1px solid #777;
    border-radius: 50%;
    background: #fff;
  }

  .radio input:checked {
    background: radial-gradient(#000 0 2px, #fff 3px);
  }

  .axis {
    display: flex;
    align-items: center;
    gap: 6px;
    padding-right: 11px;
    white-space: nowrap;
  }

  .spin {
    display: flex;
    align-items: center;
    width: 78px;
    height: 23px;
    margin-left: 4px;
    padding-right: 4px;
    border: 1px solid #777;
  }

  .spin input {
    flex: 1;
    min-width: 0;
    padding: 0 7px 0 0;
    border: none;
    background: none;
    color: #808080;
    font: inherit;
    text-align: right;
  }

  .canvas {
    width: 100%;
    background: #000;
  }

  .grey text {
    fill: #c0c0c0;
    font: 12px "Liberation Mono", monospace;
    text-anchor: middle;
  }

  .green text {
    fill: #0f0;
    font: bold 15px "Liberation Mono", monospace;
    text-anchor: middle;
  }

  .shape {
    fill: none;
    stroke: #f00;
    stroke-width: 3;
  }

  .dyn {
    padding: 2px;
    height: 28px;
    border-bottom: 1px solid #a0a0a0;
  }

  .dyn button {
    height: 23px;
    padding: 0 4px;
    border: 1px solid #0078d7;
    background: #dcebf7;
  }

  .edbtns {
    display: flex;
    justify-content: flex-end;
    align-items: center;
    height: 41px;
    padding: 2px 13px 0 0;
    border-bottom: 2px solid #fff;
  }

  .edbtns button,
  .std {
    justify-content: center;
    height: 23px;
    padding: 0 5px;
    border: 1px solid #adadad;
    background: #e1e1e1;
  }

  .edbtns button {
    margin-left: 23px;
  }

  .edbtns .std {
    width: 72px;
    margin-left: 25px;
  }

  .edbtns .std:last-child {
    margin-left: 15px;
  }

  .edstatus {
    height: 21px;
  }

  .edstatus > span {
    width: 148px;
    padding-top: 0;
  }

  .edstatus .rest {
    flex: 1;
  }

  .dialog {
    position: absolute;
    left: 149px;
    top: 204px;
    width: 411px;
    border: 1px solid #2c88e0;
    background: #f0f0f0;
    box-shadow: 0 4px 14px rgba(0, 0, 0, 0.4);
  }

  .dtitle {
    display: flex;
    align-items: center;
    justify-content: space-between;
    height: 25px;
    padding: 0 10px 0 3px;
    background: #fff;
  }

  .dbody {
    padding: 14px 13px 8px;
  }

  fieldset {
    margin: 0 0 7px;
    padding: 2px 9px 6px 7px;
    border: 1px solid #dcdcdc;
  }

  legend {
    height: 16px;
    padding: 0;
    line-height: 16px;
  }

  textarea {
    display: block;
    width: 100%;
    height: 41px;
    padding: 2px;
    border: 1px solid #7a7a7a;
    outline: none;
    resize: none;
    font: 10px/12px "DejaVu Sans Mono", monospace;
  }

  textarea::selection {
    background: #0078d7;
    color: #fff;
  }

  .dbtns {
    display: flex;
    justify-content: flex-end;
    gap: 15px;
    margin-top: 12px;
    padding-right: 1px;
  }

  .dbtns .std {
    width: 72px;
  }

  .sogou {
    position: absolute;
    right: 0;
    bottom: 40px;
    display: flex;
    align-items: center;
    gap: 7px;
    height: 23px;
    padding: 0 5px;
    border: 1px solid #b9cfe6;
    background: #fff;
    color: #1f76d2;
    font-size: 14px;
  }

  .slogo {
    margin-left: -8px;
  }

  .speed {
    position: absolute;
    left: 177px;
    top: -24px;
    width: 43px;
    height: 43px;
    padding-top: 23px;
    border-radius: 50%;
    background: linear-gradient(#2f9e43, #45c45c);
    border: 1px solid #e6f6e8;
    box-shadow: 0 1px 4px rgba(0, 0, 0, 0.6);
    color: #fff;
    font-weight: bold;
    line-height: 16px;
    text-align: center;
  }

  .ring {
    position: absolute;
    pointer-events: none;
  }

  .ring ellipse {
    fill: none;
    stroke: #f00;
    stroke-width: 8;
  }

  .first {
    left: 300px;
    top: 63px;
  }

  .second {
    left: 95px;
    top: 173px;
  }
</style>
